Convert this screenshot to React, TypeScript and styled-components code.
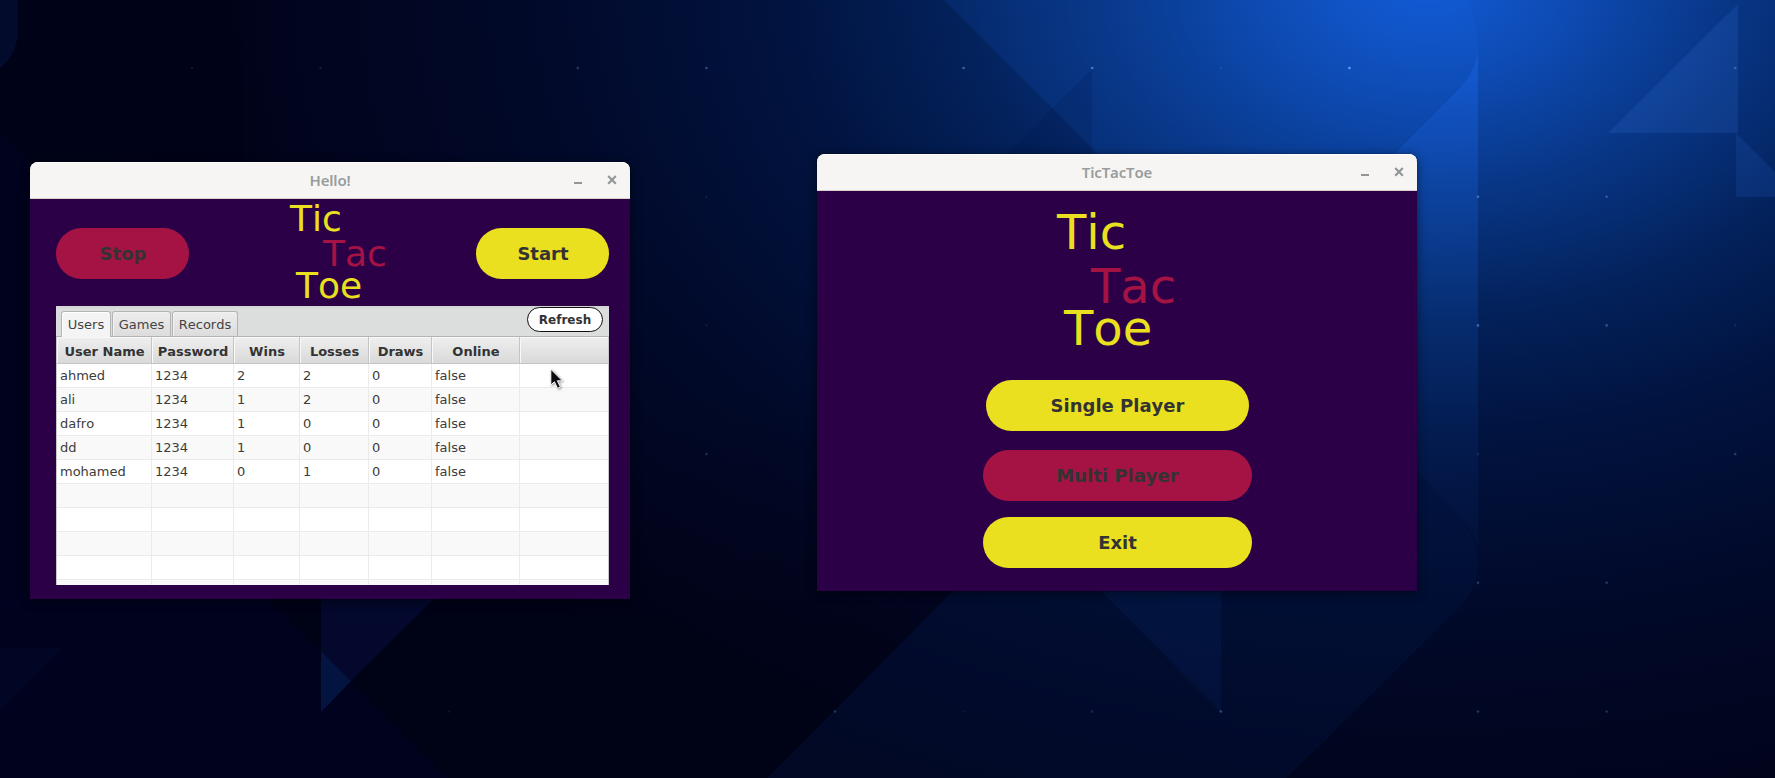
import React from "react";
import styled, { createGlobalStyle } from "styled-components";

const GlobalStyle = createGlobalStyle`
  * { box-sizing: border-box; }
  html, body { margin: 0; padding: 0; background: #010418; }
`;

const YELLOW = "#eae020";
const CRIMSON = "#a51344";
const PURPLE = "#2b0047";

const Desktop = styled.main`
  position: relative;
  width: 1775px;
  height: 778px;
  overflow: hidden;
  font-family: "DejaVu Sans", sans-serif;
  font-kerning: none;
`;

const WallpaperSvg = styled.svg`
  position: absolute;
  inset: 0;
`;

const WindowFrame = styled.section<{ $x: number; $y: number }>`
  position: absolute;
  left: ${(p) => p.$x}px;
  top: ${(p) => p.$y}px;
  width: 600px;
  height: 437px;
  display: flex;
  flex-direction: column;
  border-radius: 8px 8px 0 0;
  box-shadow: 0 0 1px rgba(0, 0, 0, 0.8), 0 2px 8px 2px rgba(0, 0, 0, 0.35);
`;

const TitleBar = styled.header`
  height: 37px;
  display: grid;
  grid-template-columns: 1fr auto 1fr;
  align-items: center;
  background: #f6f5f4;
  border-bottom: 1px solid #d6d1cd;
  border-radius: 8px 8px 0 0;
  box-shadow: inset 0 1px #fff;
`;

const TitleText = styled.h1`
  grid-column: 2;
  margin: 0;
  font: 600 15px/20px "Noto Sans", sans-serif;
  font-kerning: none;
  letter-spacing: -0.15px;
  color: #999c9c;
`;

const WindowControls = styled.div`
  display: flex;
  justify-content: flex-end;
  gap: 18px;
  padding-right: 10px;
`;

const ServerBody = styled.div`
  flex: 1;
  display: flex;
  flex-direction: column;
  padding: 0 21px 14px 26px;
  background: ${PURPLE};
`;

const ServerHeader = styled.div`
  height: 107px;
  display: flex;
  justify-content: space-between;
  align-items: flex-start;
`;

const GameBody = styled.div`
  flex: 1;
  display: flex;
  flex-direction: column;
  align-items: center;
  background: ${PURPLE};
`;

const PillButton = styled.button<{ $width: number; $color: string; $top?: number }>`
  flex: none;
  width: ${(p) => p.$width}px;
  height: 51px;
  margin: ${(p) => p.$top ?? 0}px 0 0;
  padding: 1px 0 0 1px;
  border: 0;
  border-radius: 26px;
  background: ${(p) => p.$color};
  color: #333;
  font: bold 18px/24px "DejaVu Sans", sans-serif;
  font-kerning: none;
`;

const Logo = styled.div<{ $size: number; $width: number; $height: number; $top: number }>`
  width: ${(p) => p.$width}px;
  height: ${(p) => p.$height}px;
  padding-top: ${(p) => p.$top}px;
  font-size: ${(p) => p.$size}px;
  white-space: nowrap;
`;

const LogoWord = styled.div<{ $height: number; $indent: number; $color: string }>`
  height: ${(p) => p.$height}px;
  line-height: 1;
  padding-left: ${(p) => p.$indent}px;
  color: ${(p) => p.$color};
`;

const TabPane = styled.div`
  height: 279px;
  display: flex;
  flex-direction: column;
  background: #fff;
`;

const TabStrip = styled.div`
  height: 31px;
  display: flex;
  align-items: flex-end;
  gap: 1px;
  padding: 0 6px 0 5px;
  background: linear-gradient(#d3d3d3, #dcdddd 4px, #dcdddd);
  border-bottom: 1px solid #b4b4b4;
`;

const Tab = styled.div<{ $width: number; $active?: boolean }>`
  width: ${(p) => p.$width}px;
  height: ${(p) => (p.$active ? 26 : 25)}px;
  margin-bottom: ${(p) => (p.$active ? -1 : 0)}px;
  padding: ${(p) => (p.$active ? "0" : "1px")} 0 0;
  display: flex;
  align-items: center;
  justify-content: center;
  border: 1px solid #b4b4b4;
  border-bottom: 0;
  border-radius: 3px 3px 0 0;
  background: ${(p) => (p.$active ? "#f4f4f4" : "linear-gradient(#ededed, #dcdcdc)")};
  box-shadow: inset 1px 1px ${(p) => (p.$active ? "#fff" : "#f2f2f2")};
  color: #444;
  font-size: 13px;
`;

const RefreshButton = styled.button`
  width: 76px;
  height: 25px;
  margin: 0 0 4px auto;
  padding: 0;
  border: 1px solid #111;
  border-radius: 13px;
  background: #fff;
  color: #333;
  font: bold 12px/20px "DejaVu Sans", sans-serif;
`;

const Table = styled.div`
  flex: 1;
  overflow: hidden;
  border: 1px solid #c8c8c8;
  border-top: 0;
  border-bottom: 0;
`;

const columns = "95px 82px 66px 69px 63px 88px 1fr";

const HeadRow = styled.div`
  display: grid;
  grid-template-columns: ${columns};
  height: 27px;
  border-bottom: 1px solid #c4c4c4;
  background: linear-gradient(#efefef, #d9d9d9);
`;

const HeadCell = styled.div`
  display: flex;
  align-items: center;
  justify-content: center;
  padding: 3px 0 0 1px;
  border-right: 1px solid #c4c4c4;
  box-shadow: inset 1px 1px #f8f8f8;
  color: #333;
  font-size: 13px;
  font-weight: bold;
  white-space: nowrap;

  &:last-child { border-right: 0; }
`;

const Row = styled.div<{ $odd: boolean }>`
  display: grid;
  grid-template-columns: ${columns};
  height: 24px;
  border-bottom: 1px solid #ebebeb;
  background: ${(p) => (p.$odd ? "#f9f9f9" : "#fff")};
`;

const Cell = styled.div`
  padding-left: 3px;
  border-right: 1px solid #ebebeb;
  color: #3c3c3c;
  font-size: 13px;
  line-height: 23px;

  &:last-child { border-right: 0; }
`;

const CursorSvg = styled.svg`
  position: absolute;
  left: 549px;
  top: 368px;
  filter: drop-shadow(1px 1px 1px rgba(0, 0, 0, 0.4));
`;

const headings = ["User Name", "Password", "Wins", "Losses", "Draws", "Online", ""];
const blank = ["", "", "", "", "", "", ""];
const rows = [
  ["ahmed", "1234", "2", "2", "0", "false", ""],
  ["ali", "1234", "1", "2", "0", "false", ""],
  ["dafro", "1234", "1", "0", "0", "false", ""],
  ["dd", "1234", "1", "0", "0", "false", ""],
  ["mohamed", "1234", "0", "1", "0", "false", ""],
  blank, blank, blank, blank, blank,
];

/* Stars sit on a regular lattice; each entry is [column, row, opacity]. */
const stars: [number, number, number][] = [
  [0, 0, 0.12], [1, 0, 0.15], [3, 0, 0.3], [4, 0, 0.4], [6, 0, 0.5], [7, 0, 0.6], [8, 0, 0.15], [9, 0, 0.9], [12, 0, 0.4],
  [4, 1, 0.12], [10, 1, 0.5], [11, 1, 0.4],
  [4, 2, 0.1], [10, 2, 0.5], [11, 2, 0.4], [12, 2, 0.12],
  [4, 3, 0.25], [10, 3, 0.15], [12, 3, 0.3],
  [10, 4, 0.3], [11, 4, 0.3],
  [2, 5, 0.1], [5, 5, 0.3], [6, 5, 0.1], [7, 5, 0.2], [8, 5, 0.4], [10, 5, 0.3], [11, 5, 0.25],
];

function Wallpaper() {
  return (
    <WallpaperSvg width="1775" height="778" viewBox="0 0 1775 778" aria-hidden="true">
      <defs>
        <radialGradient id="glow" gradientUnits="userSpaceOnUse" cx="0" cy="0" r="1" gradientTransform="translate(1430 -20) scale(1250 880)">
          <stop offset="0" stopColor="#125ad4" />
          <stop offset="0.1" stopColor="#0e4db8" />
          <stop offset="0.24" stopColor="#083686" />
          <stop offset="0.38" stopColor="#03215a" />
          <stop offset="0.52" stopColor="#01133f" />
          <stop offset="0.7" stopColor="#010a2b" />
          <stop offset="0.88" stopColor="#01051f" />
          <stop offset="1" stopColor="#000318" />
        </radialGradient>
        <linearGradient id="band" x1="0" y1="0" x2="0" y2="1">
          <stop offset="0" stopColor="#1a66ea" stopOpacity="0.5" />
          <stop offset="0.5" stopColor="#1050b4" stopOpacity="0.28" />
          <stop offset="1" stopColor="#0a3480" stopOpacity="0.1" />
        </linearGradient>
        <linearGradient id="leftShade" x1="0" y1="0" x2="1" y2="0">
          <stop offset="0" stopColor="#000217" stopOpacity="0.05" />
          <stop offset="1" stopColor="#000014" stopOpacity="0.3" />
        </linearGradient>
        <linearGradient id="lowerShade" gradientUnits="userSpaceOnUse" x1="0" y1="380" x2="0" y2="640">
          <stop offset="0" stopColor="#000010" stopOpacity="0" />
          <stop offset="1" stopColor="#000010" stopOpacity="0.36" />
        </linearGradient>
      </defs>
      <rect width="1775" height="778" fill="url(#glow)" />
      <path d="M944 0 L1467 0 Q1478 22 1478 45 Q1478 70 1456 92 L1300 248 L1192 248 Z" fill="#1a6cf0" fillOpacity="0.12" />
      <path d="M1478 45 Q1478 70 1456 92 L1392 156 L1392 445 L1459 516 Q1477 535 1478 551 Z" fill="url(#band)" />
      <path d="M1092 69 L1006 155 L1092 155 Z" fill="#000a30" fillOpacity="0.12" />
      <path d="M1738 4 L1738 133 L1608 133 Z" fill="#3f7ee8" fillOpacity="0.16" />
      <path d="M1736 133 L1775 172 L1775 197 L1736 197 Z" fill="#2c6ad8" fillOpacity="0.17" />
      <path d="M1390 443 L1459 516 Q1477 537 1478 560 Q1478 589 1459 608 L1287 778 L767 778 L954 590 L1390 590 Z" fill="#052158" fillOpacity="0.22" />
      <path d="M1100 590 L1221 590 L1221 712 Z" fill="#0b3c90" fillOpacity="0.14" />
      <path d="M954 590 L767 778 L447 778 L269 600 L49 380 H1164 Z" fill="url(#lowerShade)" />
      <path d="M0 600 L269 600 L447 778 L0 778 Z" fill="#040440" fillOpacity="0.16" />
      <rect width="244" height="190" fill="url(#leftShade)" />
      <path d="M0 0 H18 V32 Q17 54 0 68 Z" fill="#06225e" fillOpacity="0.28" />
      <path d="M0 134 L32 166 V601 L0 601 Z" fill="#040440" fillOpacity="0.16" />
      <path d="M0 648 H62 L0 709 Z" fill="#08205c" fillOpacity="0.12" />
      <path d="M321 598 H435 L351 681 L321 651 Z" fill="#071456" fillOpacity="0.36" />
      <path d="M321 651 L351 681 L321 712 Z" fill="#0c3888" fillOpacity="0.34" />
      {stars.map(([col, row, opacity]) => (
        <circle key={`${col}-${row}`} cx={192 + col * 128.6} cy={68 + row * 128.7} r="1.3" fill="#6ea6ff" fillOpacity={opacity} />
      ))}
    </WallpaperSvg>
  );
}

function Chrome({ title }: { title: string }) {
  return (
    <TitleBar>
      <TitleText>{title}</TitleText>
      <WindowControls>
        <svg width="16" height="16" viewBox="0 0 16 16" aria-label="Minimize">
          <rect x="4" y="10" width="8" height="2" fill="#929595" />
        </svg>
        <svg width="16" height="16" viewBox="0 0 16 16" aria-label="Close">
          <path d="M4.2 4 L11.8 11.8 M11.8 4 L4.2 11.8" stroke="#929595" strokeWidth="2.1" />
        </svg>
      </WindowControls>
    </TitleBar>
  );
}

export default function App() {
  return (
    <Desktop>
      <GlobalStyle />
      <Wallpaper />
      <WindowFrame $x={30} $y={162}>
        <Chrome title="Hello!" />
        <ServerBody>
          <ServerHeader>
            <PillButton $width={133} $color={CRIMSON} $top={29}>Stop</PillButton>
            <Logo $size={36} $width={86} $height={107} $top={2}>
              <LogoWord $height={35} $indent={0.5} $color={YELLOW}>Tic</LogoWord>
              <LogoWord $height={32} $indent={33.5} $color={CRIMSON}>Tac</LogoWord>
              <LogoWord $height={36} $indent={6.5} $color={YELLOW}>Toe</LogoWord>
            </Logo>
            <PillButton $width={133} $color={YELLOW} $top={29}>Start</PillButton>
          </ServerHeader>
          <TabPane>
            <TabStrip>
              <Tab $width={50} $active>Users</Tab>
              <Tab $width={59}>Games</Tab>
              <Tab $width={66}>Records</Tab>
              <RefreshButton>Refresh</RefreshButton>
            </TabStrip>
            <Table>
              <HeadRow>
                {headings.map((h, i) => <HeadCell key={i}>{h}</HeadCell>)}
              </HeadRow>
              {rows.map((row, r) => (
                <Row key={r} $odd={r % 2 === 1}>
                  {row.map((value, c) => <Cell key={c}>{value}</Cell>)}
                </Row>
              ))}
            </Table>
          </TabPane>
        </ServerBody>
      </WindowFrame>
      <WindowFrame $x={817} $y={154}>
        <Chrome title="TicTacToe" />
        <GameBody>
          <Logo $size={48} $width={122} $height={189} $top={17}>
            <LogoWord $height={54} $indent={1} $color={YELLOW}>Tic</LogoWord>
            <LogoWord $height={42} $indent={35} $color={CRIMSON}>Tac</LogoWord>
            <LogoWord $height={48} $indent={8} $color={YELLOW}>Toe</LogoWord>
          </Logo>
          <PillButton $width={263} $color={YELLOW}>Single Player</PillButton>
          <PillButton $width={269} $color={CRIMSON} $top={19}>Multi Player</PillButton>
          <PillButton $width={269} $color={YELLOW} $top={16}>Exit</PillButton>
        </GameBody>
      </WindowFrame>
      <CursorSvg width="18" height="24" viewBox="0 0 18 24" aria-hidden="true">
        <path d="M1.8 1.2 V17 L5.4 13.8 L8.6 20.4 L11.4 19 L8.4 12.8 H13.4 Z" fill="#0b0b14" stroke="#fff" strokeWidth="1" />
      </CursorSvg>
    </Desktop>
  );
}
